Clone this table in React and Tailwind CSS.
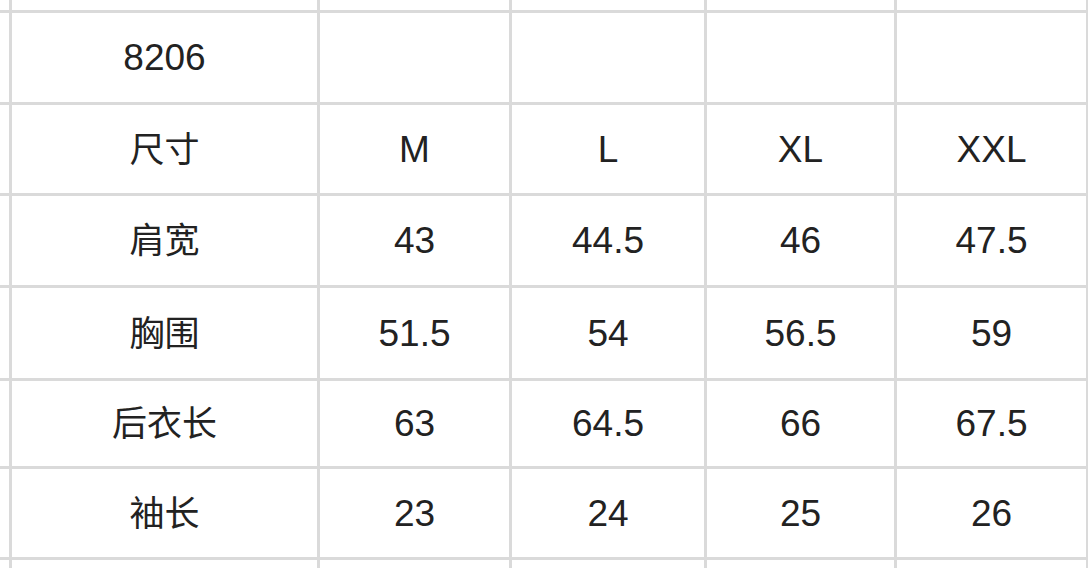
const rows = [
  ["", "", "", "", ""],
  ["8206", "", "", "", ""],
  ["尺寸", "M", "L", "XL", "XXL"],
  ["肩宽", "43", "44.5", "46", "47.5"],
  ["胸围", "51.5", "54", "56.5", "59"],
  ["后衣长", "63", "64.5", "66", "67.5"],
  ["袖长", "23", "24", "25", "26"],
  ["", "", "", "", ""],
];

const isCjk = (s) => /[\u4e00-\u9fff]/.test(s);

export default function App() {
  return (
    <div
      className="w-[1088px] h-[568px] overflow-hidden bg-[#dadada] grid gap-[3px] grid-cols-[9px_305px_189px_192px_187px_189px] grid-rows-[10px_89px_88px_89px_90px_85px_88px_8px] text-[#222222]"
      style={{ fontFamily: '"Liberation Sans", "Noto Sans CJK SC", sans-serif' }}
    >
      {rows.map((r, i) => (
        <div key={i} className="contents">
          <div className="bg-white" />
          {r.map((c, j) => (
            <div
              key={j}
              className={
                isCjk(c)
                  ? "bg-white flex items-center justify-center leading-none text-[35px]"
                  : "bg-white flex items-center justify-center leading-none text-[37px]"
              }
            >
              {c}
            </div>
          ))}
        </div>
      ))}
    </div>
  );
}
